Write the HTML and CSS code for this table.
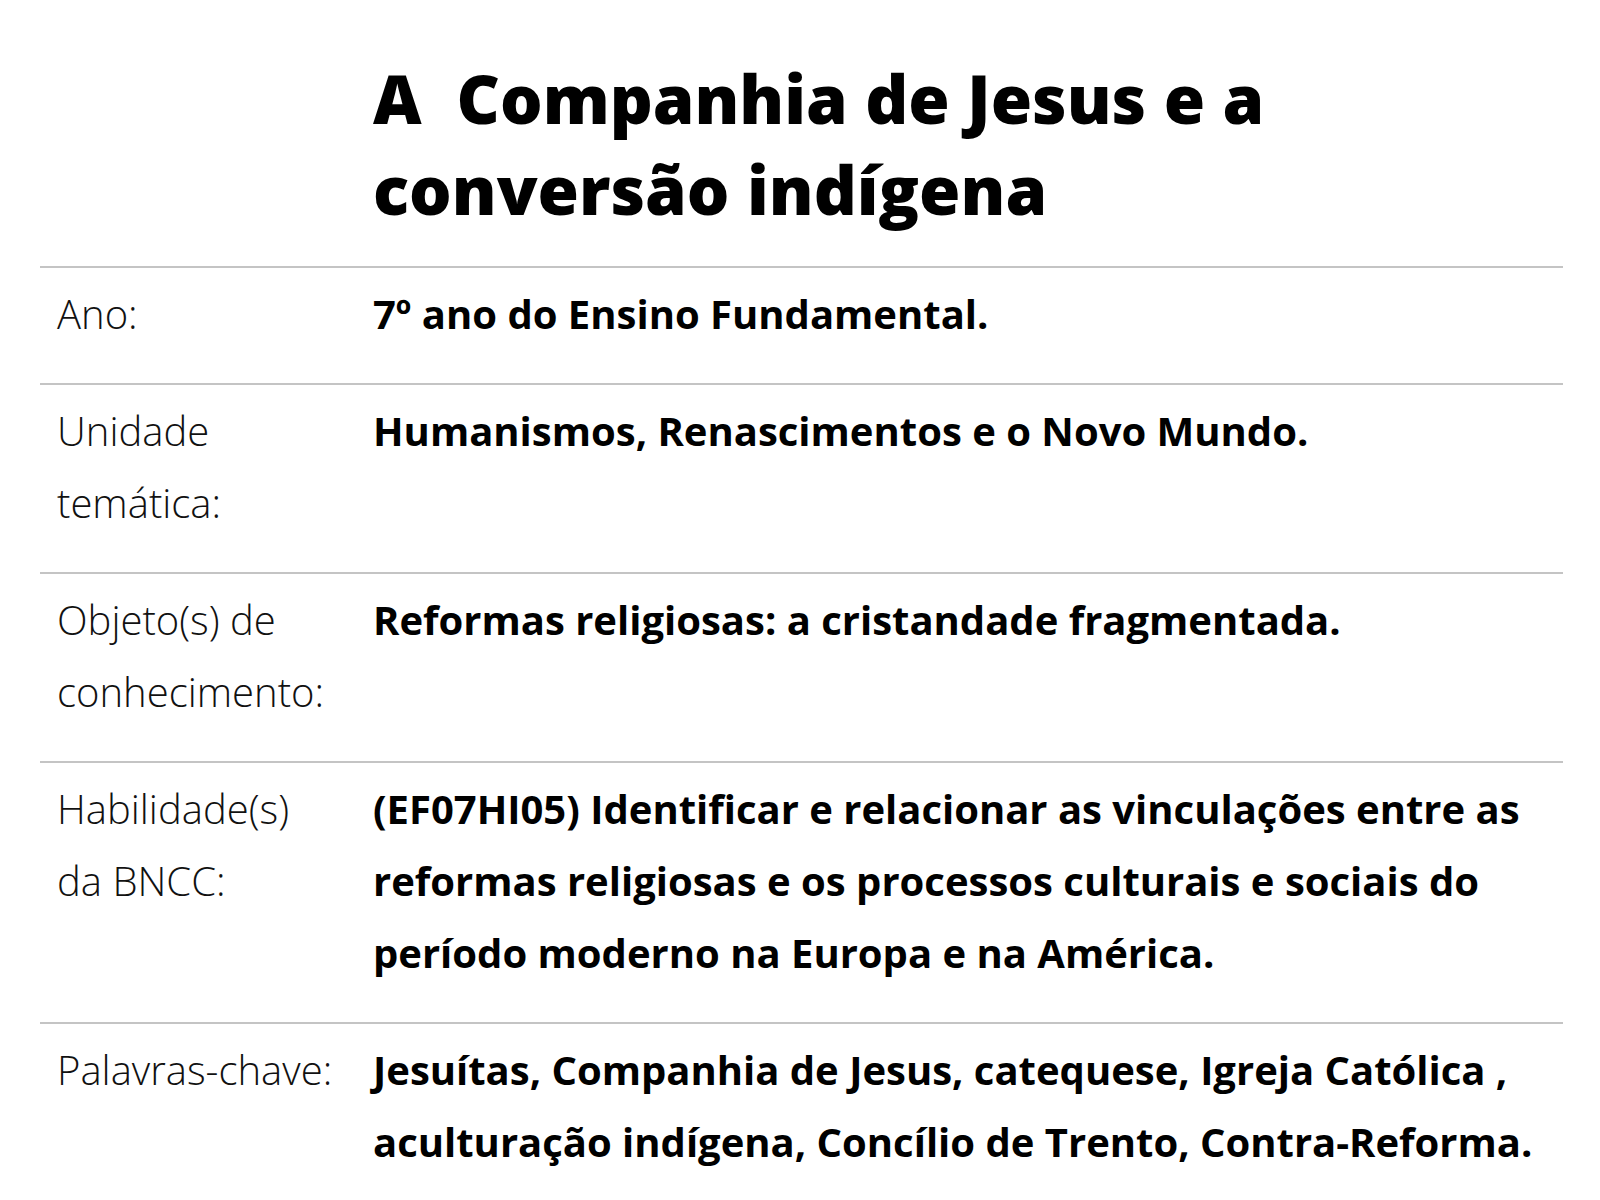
FILE: index.html
```html
<!DOCTYPE html>
<html lang="pt">
<head>
<meta charset="utf-8">
<title>A Companhia de Jesus e a conversão indígena</title>
<link rel="stylesheet" href="styles.css">
</head>
<body>
<main class="page">
  <h1 class="title">A&nbsp; Companhia de Jesus e a conversão indígena</h1>
  <section class="info">
    <div class="row">
      <div class="label">Ano:</div>
      <div class="value">7º ano do Ensino Fundamental.</div>
    </div>
    <div class="row">
      <div class="label">Unidade temática:</div>
      <div class="value">Humanismos, Renascimentos e o Novo Mundo.</div>
    </div>
    <div class="row">
      <div class="label">Objeto(s) de conhecimento:</div>
      <div class="value">Reformas religiosas: a cristandade fragmentada.</div>
    </div>
    <div class="row">
      <div class="label">Habilidade(s) da BNCC:</div>
      <div class="value">(EF07HI05) Identificar e relacionar as vinculações entre as reformas religiosas e os processos culturais e sociais do período moderno na Europa e na América.</div>
    </div>
    <div class="row">
      <div class="label">Palavras-chave:</div>
      <div class="value">Jesuítas, Companhia de Jesus, catequese, Igreja Católica , aculturação indígena, Concílio de Trento, Contra-Reforma.</div>
    </div>
  </section>
</main>
</body>
</html>
```

FILE: styles.css
```css
html, body {
  margin: 0;
  padding: 0;
  background: #ffffff;
}

body {
  font-family: "Open Sans", "Noto Sans", sans-serif;
  color: #000000;
}

.page {
  padding: 0 37px 0 40px;
}

.title {
  margin: 0;
  padding: 53px 0 0 333px;
  font-size: 67px;
  font-weight: 800;
  line-height: 91px;
  height: 266px;
  box-sizing: border-box;
}

.info {
  display: flex;
  flex-direction: column;
}

.row {
  display: grid;
  grid-template-columns: 333px 1fr;
  border-top: 2px solid #c4c4c4;
  padding: 10px 0 33px;
  font-size: 40px;
  line-height: 72px;
}

.label {
  padding: 0 37px 0 17px;
  font-weight: 300;
  color: #111111;
}

.value {
  font-weight: 700;
  color: #000000;
}
```
